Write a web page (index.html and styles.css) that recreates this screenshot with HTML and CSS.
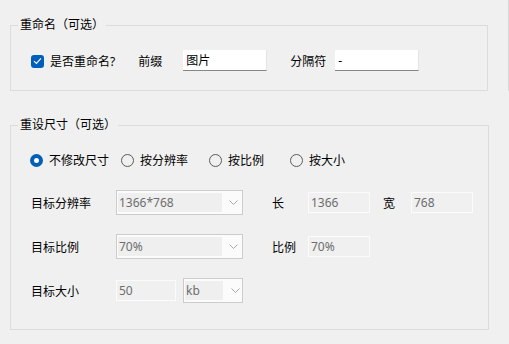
FILE: index.html
```html
<!DOCTYPE html>
<html lang="zh-CN">
<head>
  <meta charset="UTF-8" />
  <title>图片设置</title>
  <link rel="stylesheet" href="styles.css">
</head>
<body>
  <div class="page">
    <div class="main">
      <fieldset class="group group-rename">
        <legend>重命名（可选）</legend>
        <div class="rename-row">
          <span class="check">
            <svg width="9" height="8" viewBox="0 0 9 8"><path d="M1 4.2 L3.4 6.4 L8 1.4" fill="none" stroke="#fff" stroke-width="1.1"/></svg>
          </span>
          <span class="check-label">是否重命名?</span>
          <span class="lbl-prefix">前缀</span>
          <input class="edit edit-prefix" type="text" value="图片">
          <span class="lbl-sep">分隔符</span>
          <input class="edit edit-sep" type="text" value="-">
        </div>
      </fieldset>

      <fieldset class="group group-size">
        <legend>重设尺寸（可选）</legend>
        <div class="radio-row">
          <span class="radio-item w1"><span class="radio on"></span>不修改尺寸</span>
          <span class="radio-item w2"><span class="radio"></span>按分辨率</span>
          <span class="radio-item w3"><span class="radio"></span>按比例</span>
          <span class="radio-item"><span class="radio"></span>按大小</span>
        </div>

        <div class="form-row">
          <span class="row-label">目标分辨率</span>
          <span class="combo"><span class="combo-text">1366*768</span><svg class="chev" width="9" height="5" viewBox="0 0 9 5"><path d="M0.5 0.5 L4.5 4.5 L8.5 0.5" fill="none" stroke="#a8a8a8"/></svg></span>
          <span class="side-label">长</span>
          <span class="box">1366</span>
          <span class="side-label narrow">宽</span>
          <span class="box">768</span>
        </div>

        <div class="form-row">
          <span class="row-label">目标比例</span>
          <span class="combo"><span class="combo-text">70%</span><svg class="chev" width="9" height="5" viewBox="0 0 9 5"><path d="M0.5 0.5 L4.5 4.5 L8.5 0.5" fill="none" stroke="#a8a8a8"/></svg></span>
          <span class="side-label">比例</span>
          <span class="box">70%</span>
        </div>

        <div class="form-row">
          <span class="row-label">目标大小</span>
          <span class="box box-size">50</span>
          <span class="combo combo-unit"><span class="combo-text">kb</span><svg class="chev" width="9" height="5" viewBox="0 0 9 5"><path d="M0.5 0.5 L4.5 4.5 L8.5 0.5" fill="none" stroke="#a8a8a8"/></svg></span>
        </div>
      </fieldset>
    </div>
    <div class="edge"><div class="edge-line"></div></div>
  </div>
</body>
</html>
```

FILE: styles.css
```css
body {
  margin: 0;
  background: #f0f0f0;
  font-family: "Noto Sans", "Noto Sans CJK SC", sans-serif;
  font-size: 12px;
  color: #000;
}

.page {
  display: flex;
  width: 509px;
  height: 344px;
}

.main {
  width: 508px;
  padding: 17px 0 0 10px;
  box-sizing: border-box;
}

.edge {
  width: 1px;
}

.edge-line {
  height: 91px;
  background: #d9d9d9;
}

.group {
  width: 478px;
  box-sizing: border-box;
  margin: 0;
  border: 1px solid #dcdcdc;
  padding: 0 0 0 20px;
  min-width: 0;
}

.group legend {
  margin-left: -13px;
  padding: 0 2px;
  line-height: 16px;
}

.group-rename {
  padding-top: 17px;
  padding-bottom: 19px;
}

.group-size {
  width: 479px;
  margin-top: 26px;
  padding-top: 17px;
  padding-bottom: 26px;
}

/* rename row */
.rename-row {
  display: flex;
  align-items: center;
  height: 21px;
}

.check {
  width: 13px;
  height: 13px;
  border-radius: 3px;
  background: #005fb8;
  display: flex;
  align-items: center;
  justify-content: center;
  margin-top: 1px;
}

.check-label {
  margin-left: 6px;
}

.lbl-prefix {
  margin-left: 23px;
}

.lbl-sep {
  margin-left: 23px;
}

.edit {
  height: 21px;
  box-sizing: border-box;
  border: none;
  border-bottom: 1px solid #868686;
  border-right: 1px solid #e4e4e4;
  background: #fff;
  font: inherit;
  padding: 0 3px;
  outline: none;
}

.edit-prefix {
  width: 84px;
  margin-left: 21px;
}

.edit-sep {
  width: 84px;
  margin-left: 9px;
}

/* radios */
.radio-row {
  display: flex;
  align-items: center;
  height: 20px;
  margin-left: -1px;
}

.radio-item {
  display: flex;
  align-items: center;
}

.w1 { width: 91px; }
.w2 { width: 88px; }
.w3 { width: 81px; }

.radio {
  width: 13px;
  height: 13px;
  box-sizing: border-box;
  border-radius: 50%;
  border: 1px solid #5a5a5a;
  margin-right: 6px;
}

.radio.on {
  border: 4px solid #005fb8;
  background: #fff;
}

/* form rows */
.form-row {
  display: flex;
  align-items: center;
  height: 25px;
  margin-top: 20px;
}

.form-row + .form-row {
  margin-top: 19px;
}

.row-label {
  width: 85px;
}

.combo {
  width: 127px;
  height: 25px;
  box-sizing: border-box;
  border: 1px solid #cccccc;
  background: #fbfbfb;
  padding: 2px 1px;
  display: flex;
  align-items: center;
}

.combo-text {
  width: 104px;
  height: 19px;
  line-height: 19px;
  background: #efefef;
  color: #6d6d6d;
  padding-left: 1px;
  box-sizing: border-box;
}

.chev {
  margin-left: 7px;
}

.combo-unit {
  width: 60px;
  margin-left: 7px;
}

.combo-unit .combo-text {
  width: 38px;
}

.combo-unit .chev {
  margin-left: 8px;
}

.side-label {
  margin-left: 29px;
  width: 36px;
}

.side-label.narrow {
  margin-left: 13px;
  width: 28px;
}

.box {
  width: 62px;
  height: 21px;
  box-sizing: border-box;
  border: 1px solid #fbfbfb;
  line-height: 19px;
  padding-left: 2px;
  color: #6d6d6d;
}

.box-size {
  width: 60px;
}
```
